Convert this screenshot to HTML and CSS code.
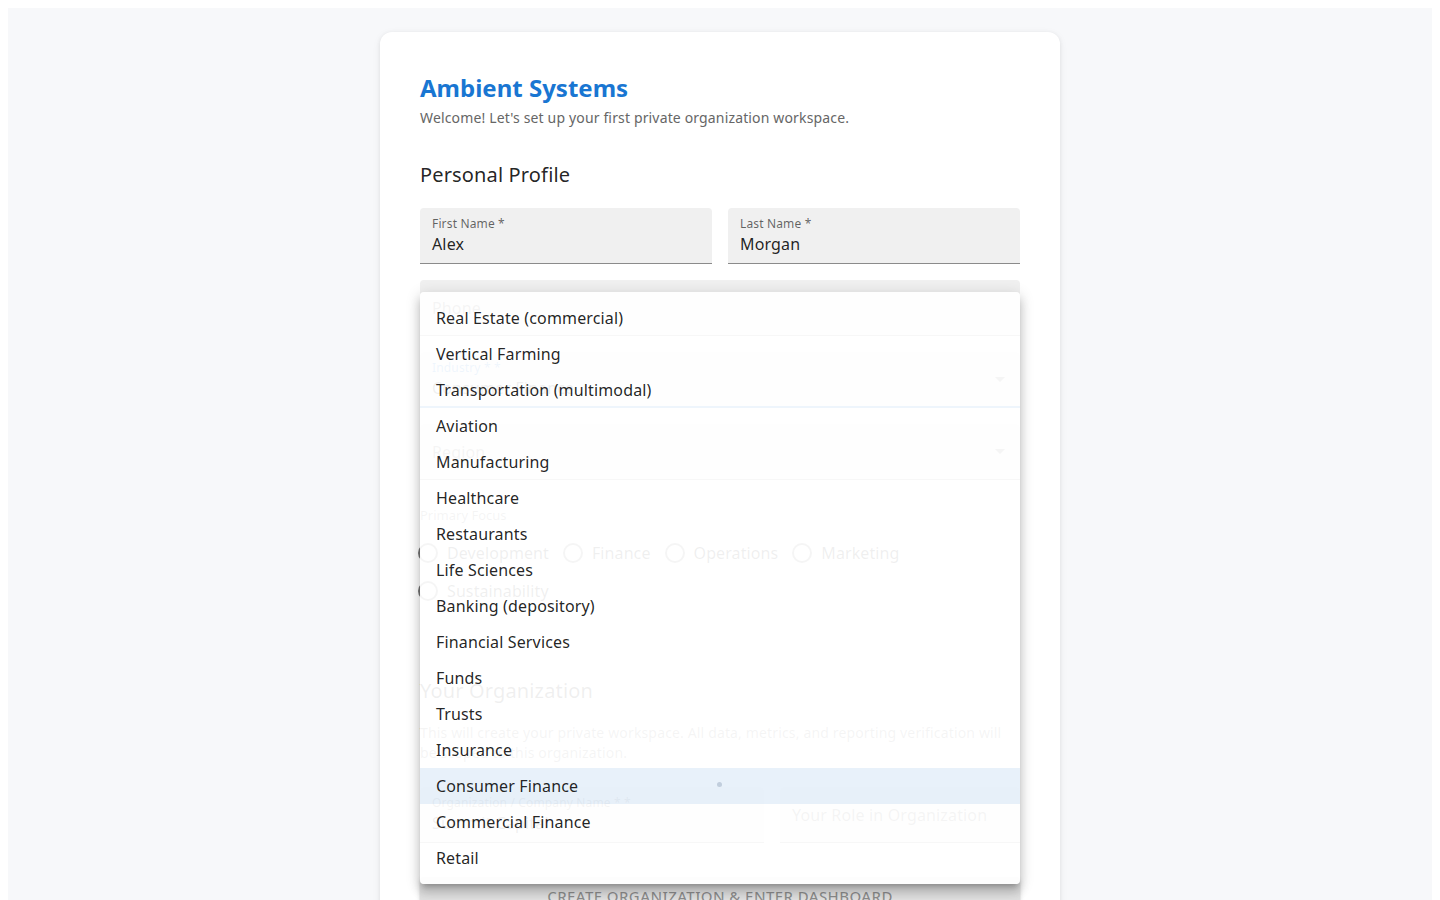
FILE: index.html
```html
<!DOCTYPE html>
<html lang="en">
<head>
<meta charset="utf-8">
<title>Ambient Systems – Setup</title>
<link rel="stylesheet" href="styles.css">
</head>
<body>
<div class="page">
  <div class="card">
    <h1 class="brand">Ambient Systems</h1>
    <p class="subtitle">Welcome! Let's set up your first private organization workspace.</p>

    <h2 class="section-title">Personal Profile</h2>
    <div class="row-two">
      <div class="field">
        <span class="field-label">First Name *</span>
        <span class="field-value">Alex</span>
      </div>
      <div class="field">
        <span class="field-label">Last Name *</span>
        <span class="field-value">Morgan</span>
      </div>
    </div>

    <div class="field field-stack field-empty">
      <span class="field-placeholder">Phone</span>
    </div>

    <div class="field field-stack field-focused field-select">
      <span class="field-label">Industry * *</span>
      <span class="field-value">Consumer Finance</span>
      <span class="select-arrow"></span>
    </div>

    <div class="field field-stack field-empty field-select">
      <span class="field-placeholder">Region</span>
      <span class="select-arrow"></span>
    </div>

    <div class="group-label">Primary Focus</div>
    <div class="radios">
      <label class="radio"><span class="radio-circle"></span><span class="radio-text">Development</span></label>
      <label class="radio"><span class="radio-circle"></span><span class="radio-text">Finance</span></label>
      <label class="radio"><span class="radio-circle"></span><span class="radio-text">Operations</span></label>
      <label class="radio"><span class="radio-circle"></span><span class="radio-text">Marketing</span></label>
      <label class="radio"><span class="radio-circle"></span><span class="radio-text">Sustainability</span></label>
    </div>

    <h2 class="section-title org-title">Your Organization</h2>
    <p class="desc">This will create your private workspace. All data, metrics, and reporting verification will be scoped to this organization.</p>

    <div class="row-org">
      <div class="field">
        <span class="field-label">Organization / Company Name * *</span>
        <span class="field-value">Summit Capital</span>
      </div>
      <div class="field field-empty">
        <span class="field-placeholder">Your Role in Organization</span>
      </div>
    </div>

    <button class="submit" disabled>Create Organization &amp; Enter Dashboard</button>

    <ul class="menu">
      <li class="menu-item">Real Estate (commercial)</li>
      <li class="menu-item">Vertical Farming</li>
      <li class="menu-item">Transportation (multimodal)</li>
      <li class="menu-item">Aviation</li>
      <li class="menu-item">Manufacturing</li>
      <li class="menu-item">Healthcare</li>
      <li class="menu-item">Restaurants</li>
      <li class="menu-item">Life Sciences</li>
      <li class="menu-item">Banking (depository)</li>
      <li class="menu-item">Financial Services</li>
      <li class="menu-item">Funds</li>
      <li class="menu-item">Trusts</li>
      <li class="menu-item">Insurance</li>
      <li class="menu-item menu-item-selected">Consumer Finance<span class="ripple-dot"></span></li>
      <li class="menu-item">Commercial Finance</li>
      <li class="menu-item">Retail</li>
    </ul>
  </div>
</div>
</body>
</html>
```

FILE: styles.css
```css
* { box-sizing: border-box; }

html, body {
  background: #ffffff;
}

body {
  margin: 8px;
  font-family: "Noto Sans", "Open Sans", "Liberation Sans", sans-serif;
  color: rgba(0, 0, 0, 0.87);
  height: 892px;
  overflow: hidden;
}

.page {
  background: #f7f8fa;
  padding: 24px 0 40px;
  min-height: 100%;
  display: flex;
  justify-content: center;
}

.card {
  position: relative;
  width: 680px;
  background: #ffffff;
  border-radius: 12px;
  box-shadow: 0 1px 4px rgba(0, 0, 0, 0.08), 0 2px 10px rgba(0, 0, 0, 0.05);
  padding: 40px 40px 40px;
  display: flex;
  flex-direction: column;
}

.brand {
  margin: 0;
  font-size: 24px;
  line-height: 32px;
  font-weight: 700;
  color: #1976d2;
}

.subtitle {
  margin: 4px 0 0;
  font-size: 14px;
  line-height: 20px;
  letter-spacing: 0.15px;
  color: #666666;
}

.section-title {
  margin: 33px 0 0;
  font-size: 20px;
  line-height: 28px;
  font-weight: 400;
  letter-spacing: 0.15px;
  color: rgba(0, 0, 0, 0.87);
}

.row-two {
  margin-top: 19px;
  display: grid;
  grid-template-columns: 1fr 1fr;
  gap: 16px;
}

.field {
  position: relative;
  height: 56px;
  background: #f0f0f0;
  border-radius: 4px 4px 0 0;
  border-bottom: 1px solid rgba(0, 0, 0, 0.42);
  padding: 8px 12px 0;
  display: flex;
  flex-direction: column;
}

.field-stack {
  margin-top: 16px;
}

.field-label {
  font-size: 12px;
  line-height: 16px;
  letter-spacing: 0.15px;
  color: rgba(0, 0, 0, 0.6);
}

.field-value {
  font-size: 16px;
  line-height: 24px;
  letter-spacing: 0.15px;
  color: rgba(0, 0, 0, 0.87);
}

.field-empty {
  justify-content: center;
  padding-top: 0;
}

.field-placeholder {
  font-size: 16px;
  line-height: 24px;
  letter-spacing: 0.15px;
  color: rgba(0, 0, 0, 0.6);
}

.field-focused {
  border-bottom: 2px solid #1976d2;
}

.field-focused .field-label {
  color: #1976d2;
}

.select-arrow {
  position: absolute;
  right: 15px;
  top: 25px;
  width: 0;
  height: 0;
  border-left: 5px solid transparent;
  border-right: 5px solid transparent;
  border-top: 5px solid rgba(0, 0, 0, 0.54);
}

.group-label {
  margin-top: 25px;
  font-size: 13px;
  line-height: 20px;
  color: rgba(0, 0, 0, 0.6);
}

.radios {
  margin-top: 9px;
  display: flex;
  flex-wrap: wrap;
  column-gap: 14px;
  margin-left: -2px;
}

.radio {
  height: 38px;
  display: flex;
  align-items: center;
}

.radio-circle {
  width: 20px;
  height: 20px;
  border: 2px solid rgba(0, 0, 0, 0.54);
  border-radius: 50%;
}

.radio-text {
  margin-left: 9px;
  font-size: 16px;
  line-height: 24px;
  letter-spacing: 0.1px;
  color: rgba(0, 0, 0, 0.87);
}

.org-title {
  margin-top: 67px;
}

.desc {
  margin: 18px 0 0;
  font-size: 14px;
  line-height: 20px;
  letter-spacing: 0.15px;
  color: rgba(0, 0, 0, 0.6);
}

.row-org {
  margin-top: 24px;
  display: grid;
  grid-template-columns: 344px 1fr;
  gap: 16px;
}

.submit {
  margin-top: 34px;
  height: 38px;
  border: none;
  border-radius: 4px;
  background: #e0e0e0;
  color: rgba(0, 0, 0, 0.38);
  font-family: inherit;
  font-size: 15px;
  font-weight: 500;
  letter-spacing: 0.4px;
  text-transform: uppercase;
  box-shadow: 0 3px 1px -2px rgba(0, 0, 0, 0.2), 0 2px 2px rgba(0, 0, 0, 0.14), 0 1px 5px rgba(0, 0, 0, 0.12);
}

.menu {
  position: absolute;
  left: 40px;
  top: 260px;
  width: 600px;
  margin: 0;
  padding: 8px 0;
  list-style: none;
  background: rgba(255, 255, 255, 0.93);
  border-radius: 4px;
  box-shadow: 0 5px 5px -3px rgba(0, 0, 0, 0.2), 0 8px 10px 1px rgba(0, 0, 0, 0.14), 0 3px 14px 2px rgba(0, 0, 0, 0.12);
}

.menu-item {
  position: relative;
  height: 36px;
  padding: 6px 16px;
  font-size: 16px;
  line-height: 24px;
  letter-spacing: 0.15px;
  color: rgba(0, 0, 0, 0.87);
}

.menu-item-selected {
  background: rgba(25, 118, 210, 0.1);
}

.ripple-dot {
  position: absolute;
  left: 297px;
  top: 14px;
  width: 5px;
  height: 5px;
  border-radius: 50%;
  background: rgba(120, 140, 165, 0.35);
}
```
